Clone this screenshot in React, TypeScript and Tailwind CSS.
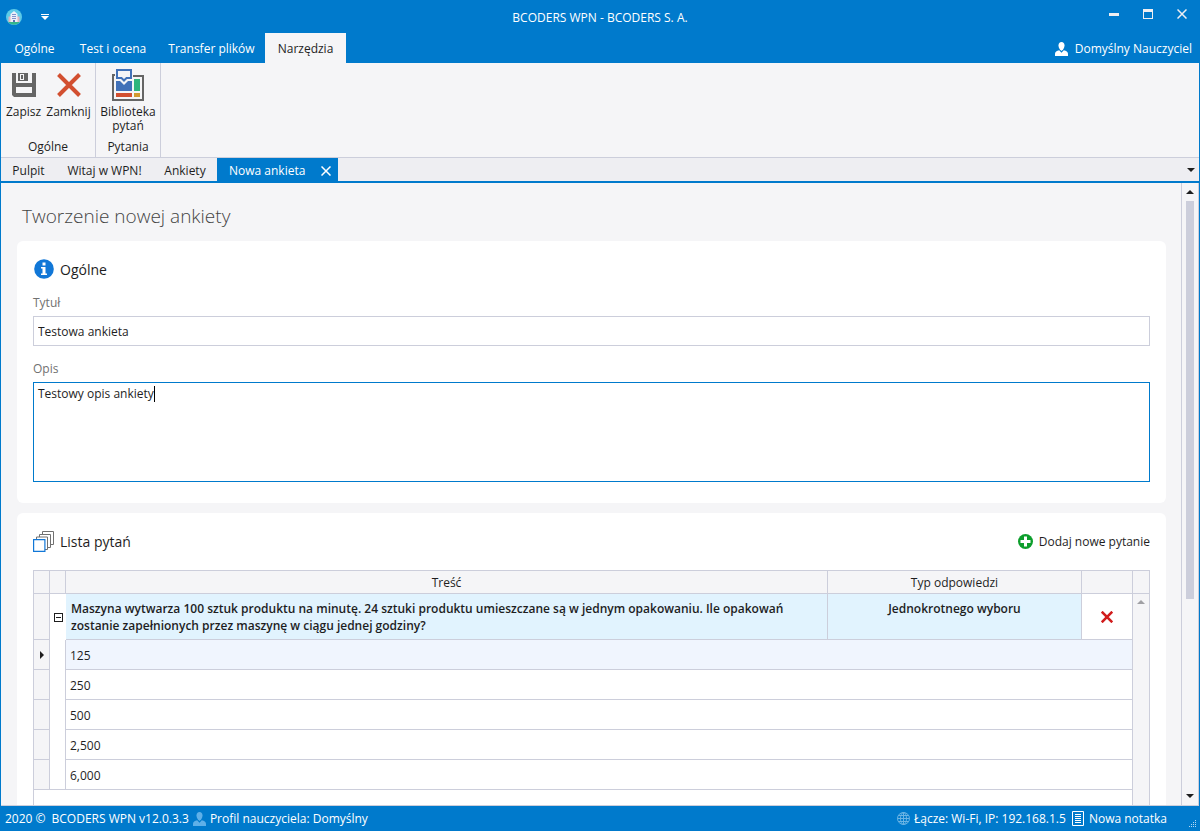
import { useState } from 'react'
import type { ReactNode } from 'react'

const ribbonTabs = [
    { label: 'Ogólne', width: 'w-[67px]' },
    { label: 'Test i ocena', width: 'w-[90px]' },
    { label: 'Transfer plików', width: 'w-[107px]' },
    { label: 'Narzędzia', width: 'w-[81px]' },
]

const documentTabs = [
    { label: 'Pulpit', width: 'w-[55px]' },
    { label: 'Witaj w WPN!', width: 'w-[97px]' },
    { label: 'Ankiety', width: 'w-[64px]' },
]

const answers = ['125', '250', '500', '2,500', '6,000']

function Arrow({ direction, className }: { direction: 'up' | 'down' | 'right'; className?: string }) {
    const paths = {
        up: 'M0 6 4 2l4 4z',
        down: 'M0 2h8L4 6z',
        right: 'M2 0l4 4-4 4z',
    }
    return (
        <svg viewBox="0 0 8 8" className={`size-2 ${className ?? ''}`} fill="currentColor" aria-hidden="true">
            <path d={paths[direction]} />
        </svg>
    )
}

function UserIcon({ className }: { className?: string }) {
    return (
        <svg viewBox="0 0 13 14" className={`h-[14px] w-[13px] ${className ?? ''}`} fill="currentColor" aria-hidden="true">
            <path d="M6.5 0C8.400 0 9.500 1.300 9.500 3.300c0 1.700-.6 3.200-1.400 4.200L6.500 9 4.900 7.500C4.100 6.500 3.500 5 3.500 3.300 3.500 1.300 4.600 0 6.500 0z" />
            <path d="M0 14v-2.200C0 10 1.700 9 4.200 8.300L6.500 10.800 8.800 8.300C11.300 9 13 10 13 11.800V14z" />
        </svg>
    )
}

function AppLogo() {
    return (
        <svg viewBox="0 0 16 16" className="size-4" aria-hidden="true">
            <circle cx="8" cy="8" r="8" fill="#5ccbe8" />
            <path d="M2 13h12A8 8 0 0 1 2 13z" fill="#35b58a" />
            <path d="M2.500 7.500h11V13h-11z" fill="#e3b4c0" />
            <path d="M4.500 5 8 2l3.500 3v8h-7z" fill="#eef0f8" />
            <path d="M6 5.500h4M6 7.500h4M6 9.500h4" stroke="#7f92cc" />
            <path d="M7 11h2v2H7z" fill="#5a6fb0" />
        </svg>
    )
}

function SaveIcon() {
    return (
        <svg viewBox="0 0 24 24" className="size-6" aria-hidden="true">
            <path d="M0 0h4v10h16V0h4v24H2l-2-2z" fill="#656565" />
            <path d="M6 0h10v8H6z" fill="#656565" />
            <path d="M8 1h4v6H8z" fill="#f5f5f7" />
            <path d="M9 2h2v4H9z" fill="#656565" />
            <path d="M4 14h16v6H4z" fill="#f5f5f7" />
        </svg>
    )
}

function LibraryIcon() {
    return (
        <svg viewBox="0 0 32 32" className="size-8" aria-hidden="true">
            <path d="M3 6H1v25h30V7H21" fill="none" stroke="#656565" strokeWidth="2" />
            <path d="M4 12h4l4 4 4-4h4v10H4z" fill="#4171b8" />
            <path d="M5 1h14v8h-4.500L12 11.500 9.500 9H5z" fill="#f5f5f7" stroke="#4171b8" strokeWidth="2" />
            <path d="M22 10h6v12h-6z" fill="#2fb57c" />
            <path d="M4 24h16v4H4z" fill="#d24f30" />
            <path d="M22 24h6v4h-6z" fill="#d29a30" />
        </svg>
    )
}

function CardHeading({ icon, children }: { icon: ReactNode; children: ReactNode }) {
    return (
        <h2 className="flex h-[21px] items-center gap-[6px] text-[14px]">
            {icon}
            {children}
        </h2>
    )
}

function TitleBar() {
    return (
        <header className="grid h-[33px] shrink-0 grid-cols-[1fr_auto_1fr] items-center text-white">
            <div className="flex items-center gap-[18px] pl-[5px]">
                <AppLogo />
                <button aria-label="Dostosuj pasek szybkiego dostępu">
                    <svg viewBox="0 0 10 8" className="h-2 w-[10px]" fill="currentColor" aria-hidden="true">
                        <path d="M1 1h8v1H1zM1 3h8L5 7z" />
                    </svg>
                </button>
            </div>
            <span className="pt-[2px]">BCODERS WPN - BCODERS S. A.</span>
            <div className="flex h-7 items-center justify-end self-start">
                <button className="flex h-7 w-[34px] items-center justify-center" aria-label="Minimalizuj">
                    <span className="h-[3px] w-[10px] bg-[#eeeef2]" />
                </button>
                <button className="flex h-7 w-[34px] items-center justify-center" aria-label="Maksymalizuj">
                    <span className="size-[10px] border border-t-[3px] border-[#eeeef2]" />
                </button>
                <button className="flex h-7 w-[34px] items-center justify-center" aria-label="Zamknij okno">
                    <svg viewBox="0 0 10 10" className="size-[10px]" stroke="#eeeef2" strokeWidth="1.500" aria-hidden="true">
                        <path d="M.5.5l9 9M9.500.5l-9 9" />
                    </svg>
                </button>
            </div>
        </header>
    )
}

function Ribbon() {
    const [active, setActive] = useState('Narzędzia')

    return (
        <>
            <nav className="flex h-[30px] shrink-0 text-white">
                {ribbonTabs.map((tab) => (
                    <button
                        key={tab.label}
                        onClick={() => setActive(tab.label)}
                        className={`${tab.width} pt-[2px] whitespace-nowrap ${active === tab.label ? 'bg-[#f5f5f7] text-[#1e1e1e]' : ''}`}
                    >
                        {tab.label}
                    </button>
                ))}
                <button className="ml-auto flex items-center gap-[7px] pt-[2px] pr-[7px]">
                    <UserIcon />
                    Domyślny Nauczyciel
                </button>
            </nav>

            <div className="flex h-[95px] shrink-0 border-b border-[#cccedb] bg-[#f5f5f7]">
                <section className="flex w-[95px] flex-col border-r border-[#cccedb]">
                    <div className="flex flex-1">
                        <button className="flex w-[45px] flex-col items-center pt-[10px]">
                            <SaveIcon />
                            <span className="mt-2 leading-[14px]">Zapisz</span>
                        </button>
                        <button className="flex w-[45px] flex-col items-center pt-[10px]">
                            <svg viewBox="0 0 24 24" className="size-6" stroke="#d24f30" strokeWidth="4" aria-hidden="true">
                                <path d="M1.500 1.500l21 21M22.500 1.500l-21 21" />
                            </svg>
                            <span className="mt-2 leading-[14px]">Zamknij</span>
                        </button>
                    </div>
                    <h2 className="h-5 text-center leading-5">Ogólne</h2>
                </section>
                <section className="flex w-[65px] flex-col border-r border-[#cccedb]">
                    <button className="flex flex-1 flex-col items-center pt-[6px]">
                        <LibraryIcon />
                        <span className="mt-1 leading-[14px]">Biblioteka pytań</span>
                    </button>
                    <h2 className="h-5 text-center leading-5">Pytania</h2>
                </section>
            </div>
        </>
    )
}

function DocumentTabs() {
    return (
        <nav className="flex h-[25px] shrink-0 border-b-2 border-[#007acc] bg-[#eeeef2]">
            {documentTabs.map((tab) => (
                <button key={tab.label} className={`${tab.width} pt-[2px] whitespace-nowrap`}>
                    {tab.label}
                </button>
            ))}
            <div className="flex w-[121px] items-center justify-between bg-[#007acc] px-[7px] pt-[2px] pl-3 text-white">
                <button>Nowa ankieta</button>
                <button aria-label="Zamknij kartę">
                    <svg viewBox="0 0 10 10" className="size-[10px]" stroke="currentColor" strokeWidth="1.500" aria-hidden="true">
                        <path d="M.5.5l9 9M9.500.5l-9 9" />
                    </svg>
                </button>
            </div>
            <button className="ml-auto px-1" aria-label="Lista kart">
                <Arrow direction="down" />
            </button>
        </nav>
    )
}

function GeneralCard() {
    const [title, setTitle] = useState('Testowa ankieta')
    const [description, setDescription] = useState('Testowy opis ankiety')

    return (
        <section className="rounded-md bg-white px-4 pt-[18px] pb-[21px]">
            <CardHeading
                icon={
                    <svg viewBox="0 0 21 21" className="size-[21px]" aria-hidden="true">
                        <circle cx="11" cy="10" r="9.800" fill="#1177d7" />
                        <path d="M9.500 3.500h3v3h-3zM8 8h4.500v6.500H14V16H8v-1.500h1.500v-5H8z" fill="#fff" />
                    </svg>
                }
            >
                Ogólne
            </CardHeading>
            <label htmlFor="title" className="mt-3 block h-6 leading-[22px] text-[#717171]">
                Tytuł
            </label>
            <input
                id="title"
                value={title}
                onChange={(e) => setTitle(e.target.value)}
                className="block h-[30px] w-full border border-[#cccedb] px-1 outline-none focus:border-[#007acc]"
            />
            <label htmlFor="description" className="mt-3 block h-6 leading-[22px] text-[#717171]">
                Opis
            </label>
            <div className="relative">
                <textarea
                    id="description"
                    value={description}
                    onChange={(e) => setDescription(e.target.value)}
                    className="peer block h-[100px] w-full resize-none border border-[#007acc] px-1 py-[3px] leading-4 outline-none"
                />
                {/* Resting caret, replaced by the native one on focus */}
                <span className="pointer-events-none absolute top-1 left-[121px] h-4 w-px bg-black peer-focus:hidden" />
            </div>
        </section>
    )
}

function QuestionTable() {
    return (
        <table className="w-full table-fixed border-separate border-spacing-0 border-t border-l border-[#cccedb]">
            <colgroup>
                <col className="w-4" />
                <col className="w-4" />
                <col />
                <col className="w-[254px]" />
                <col className="w-[51px]" />
                <col className="w-[17px]" />
            </colgroup>
            <thead>
                <tr className="h-[23px] bg-[#f5f5f7] *:border-r *:border-b *:border-[#cccedb] *:px-0 *:pt-[2px] *:pb-0 *:font-normal">
                    <th />
                    <th />
                    <th>Treść</th>
                    <th>Typ odpowiedzi</th>
                    <th />
                    <th />
                </tr>
            </thead>
            <tbody>
                <tr className="h-[46px]">
                    <td className="border-r border-b border-[#cccedb] bg-[#f5f5f7]" />
                    <td className="p-0">
                        <button className="ml-1 flex size-[9px] items-center justify-center border border-[#1e1e1e]" aria-label="Zwiń">
                            <span className="h-px w-[5px] bg-[#1e1e1e]" />
                        </button>
                    </td>
                    <td className="border-r border-b border-[#cccedb] bg-[#e1f3fe] pt-[6px] pr-6 pb-[5px] pl-[5px] align-top leading-[17px] font-semibold">
                        Maszyna wytwarza 100 sztuk produktu na minutę. 24 sztuki produktu umieszczane są w jednym opakowaniu. Ile
                        opakowań zostanie zapełnionych przez maszynę w ciągu jednej godziny?
                    </td>
                    <td className="border-r border-b border-[#cccedb] bg-[#e1f3fe] pt-[6px] pb-[5px] text-center align-top leading-[17px] font-semibold">
                        Jednokrotnego wyboru
                    </td>
                    <td className="border-r border-b border-[#cccedb] p-0 text-center">
                        <button className="inline-flex align-middle" aria-label="Usuń pytanie">
                            <svg viewBox="0 0 12 12" className="size-3" stroke="#d11c1c" strokeWidth="2.600" aria-hidden="true">
                                <path d="M.7.7l10.600 10.600M11.300.7L.7 11.300" />
                            </svg>
                        </button>
                    </td>
                    <td rowSpan={answers.length + 2} className="border-r border-[#cccedb] bg-[#f5f5f7] p-0 pt-1 align-top">
                        <Arrow direction="up" className="mx-auto text-[#a0a0a4]" />
                    </td>
                </tr>
                {answers.map((answer, index) => (
                    <tr key={answer} className="h-[30px]">
                        <td className="border-r border-b border-[#cccedb] bg-[#f5f5f7] p-0">
                            {index === 0 && <Arrow direction="right" className="mx-auto" />}
                        </td>
                        <td className={`border-r border-[#cccedb] p-0 ${index === answers.length - 1 ? 'border-b' : ''}`} />
                        <td
                            colSpan={3}
                            className={`border-r border-b border-[#cccedb] px-1 pt-[2px] pb-0 ${index === 0 ? 'bg-[#f0f5fe]' : ''}`}
                        >
                            {answer}
                        </td>
                    </tr>
                ))}
                <tr className="h-[120px]">
                    <td colSpan={5} className="border-r border-[#cccedb]" />
                </tr>
            </tbody>
        </table>
    )
}

function QuestionsCard() {
    return (
        <section className="mt-[10px] rounded-md bg-white px-4 pt-[18px]">
            <div className="mb-[18px] flex items-center justify-between">
                <CardHeading
                    icon={
                        <svg viewBox="0 0 21 21" className="size-[21px]" fill="#fff" aria-hidden="true">
                            <path d="M9.500.5h11v13h-11z" stroke="#717171" />
                            <path d="M6.500 3.500h11v13h-11z" stroke="#717171" />
                            <path d="M3.500 6h11v12.500h-11z" stroke="#717171" />
                            <path d="M.6 8.600h11.300v11.800H.6z" stroke="#1177d7" strokeWidth="1.200" />
                        </svg>
                    }
                >
                    Lista pytań
                </CardHeading>
                <button className="flex items-center gap-[6px]">
                    <svg viewBox="0 0 15 15" className="size-[15px]" aria-hidden="true">
                        <circle cx="7.500" cy="7.500" r="7.500" fill="#0d9e2c" />
                        <path d="M6 2.500h3V6h3.500v3H9v3.500H6V9H2.500V6H6z" fill="#fff" />
                    </svg>
                    Dodaj nowe pytanie
                </button>
            </div>
            <QuestionTable />
        </section>
    )
}

function ScrollBar() {
    return (
        <div className="flex w-[18px] shrink-0 flex-col items-center border-x border-[#cccedb] bg-[#f5f5f7]">
            <button className="flex h-[18px] shrink-0 items-center" aria-label="Przewiń w górę">
                <Arrow direction="up" />
            </button>
            <div className="w-2 flex-1">
                <div className="h-[68%] bg-[#cccedb]" />
            </div>
            <button className="flex h-[18px] shrink-0 items-center" aria-label="Przewiń w dół">
                <Arrow direction="down" />
            </button>
        </div>
    )
}

function StatusBar() {
    return (
        <footer className="flex h-[25px] shrink-0 items-center text-white">
            <span className="pl-1">2020 ©</span>
            <span className="pl-[6px]">BCODERS WPN v12.0.3.3</span>
            <UserIcon className="mx-1 text-[#5fb0e8]" />
            <span>Profil nauczyciela: Domyślny</span>
            <svg viewBox="0 0 13 13" className="mr-1 ml-auto size-[13px]" fill="none" stroke="#6bb4e4" aria-hidden="true">
                <circle cx="6.500" cy="6.500" r="6" />
                <ellipse cx="6.500" cy="6.500" rx="3" ry="6" />
                <path d="M6.500.5v12M.5 6.500h12M1.500 3.500h10M1.500 9.500h10" />
            </svg>
            <span>Łącze: Wi-Fi, IP: 192.168.1.5</span>
            <button className="ml-[6px] flex items-center gap-1">
                <svg viewBox="0 0 13 15" className="h-[15px] w-[13px]" fill="none" stroke="currentColor" aria-hidden="true">
                    <path d="M.5.5h11v14H.5zM3 3.500h6M3 5.500h6M3 7.500h6M3 9.500h6M3 11.500h6" />
                </svg>
                Nowa notatka
            </button>
            <svg viewBox="0 0 8 8" className="mr-[2px] mb-[3px] ml-[22px] size-2 self-end" fill="#b5d9f2" aria-hidden="true">
                <path d="M6 0h1v1H6zM6 2h1v1H6zM4 2h1v1H4zM6 4h1v1H6zM4 4h1v1H4zM2 4h1v1H2zM6 6h1v1H6zM4 6h1v1H4zM2 6h1v1H2zM0 6h1v1H0z" />
            </svg>
        </footer>
    )
}

export default function App() {
    return (
        <div className="flex h-screen flex-col bg-[#007acc] px-px font-['Open_Sans','Noto_Sans',sans-serif] text-[12px] text-[#1e1e1e]">
            <TitleBar />
            <Ribbon />
            <DocumentTabs />
            <div className="flex min-h-0 flex-1 border-b border-[#cccedb] bg-[#f5f5f7]">
                <main className="min-w-0 flex-1 overflow-hidden pr-[15px] pl-4">
                    <h1 className="flex h-[58px] items-center pt-2 pl-[5px] text-[19px] font-light text-[#444]">
                        Tworzenie nowej ankiety
                    </h1>
                    <GeneralCard />
                    <QuestionsCard />
                </main>
                <ScrollBar />
            </div>
            <StatusBar />
        </div>
    )
}
